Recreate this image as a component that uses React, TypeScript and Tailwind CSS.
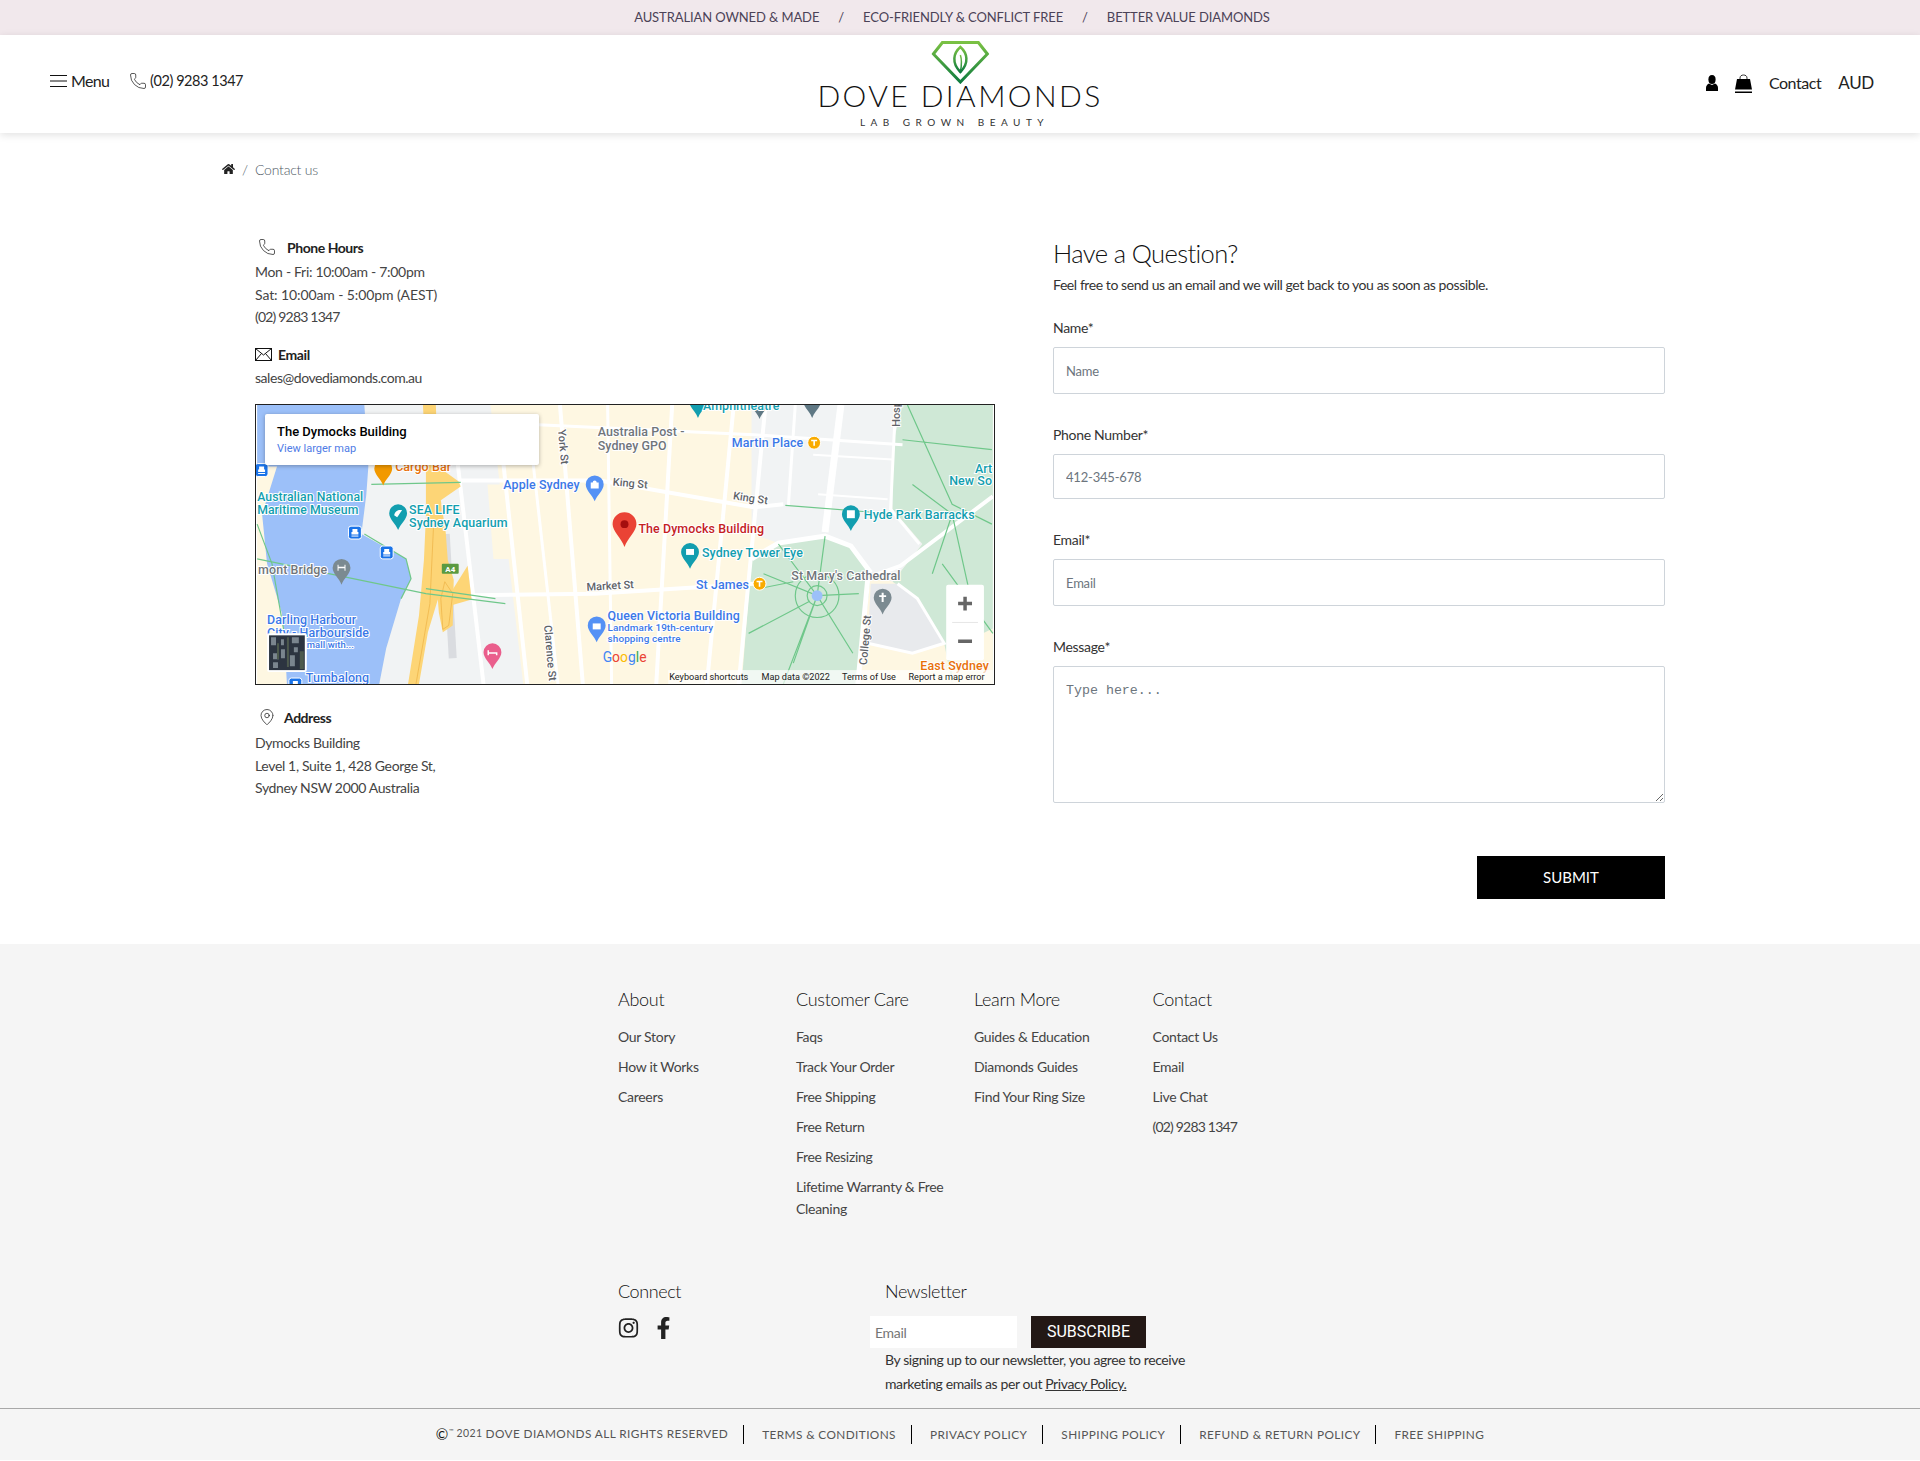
import { FC } from "react";
import { FaHome, FaInstagram, FaFacebookF } from "react-icons/fa";
import { MapPin, Phone } from "lucide-react";

const footerColumns = [
  { title: "About", links: ["Our Story", "How it Works", "Careers"] },
  {
    title: "Customer Care",
    links: ["Faqs", "Track Your Order", "Free Shipping", "Free Return", "Free Resizing", "Lifetime Warranty & Free Cleaning"],
  },
  { title: "Learn More", links: ["Guides & Education", "Diamonds Guides", "Find Your Ring Size"] },
  { title: "Contact", links: ["Contact Us", "Email", "Live Chat", "(02) 9283 1347"] },
];

const legalLinks = ["TERMS & CONDITIONS", "PRIVACY POLICY", "SHIPPING POLICY", "REFUND & RETURN POLICY", "FREE SHIPPING"];

const teal = "#129eaf";
const blue = "#3b78e7";
const gray = "#70757a";

const mapLabels: [string, number, number, string, number][] = [
  ["Amphitheatre", 449, 5, teal, 12.5],
  ["Australia Post -", 343, 31, gray, 12.5],
  ["Sydney GPO", 343, 45, gray, 12.5],
  ["Martin Place", 478, 42, blue, 12.5],
  ["Apple Sydney", 248, 85, blue, 12.5],
  ["Cargo Bar", 139, 66, "#e8710a", 12.5],
  ["Australian National", 0, 97, teal, 12.3],
  ["Maritime Museum", 0, 110, teal, 12.3],
  ["SEA LIFE", 153, 110, teal, 12.5],
  ["Sydney Aquarium", 153, 123, teal, 12.5],
  ["mont Bridge", 1, 170, gray, 12.5],
  ["Darling Harbour", 10, 221, blue, 12.5],
  ["City - Harbourside", 10, 234, blue, 12.5],
  ["mall with...", 50, 245, blue, 9.5],
  ["Tumbalong", 49, 279, blue, 12.5],
  ["Queen Victoria Building", 353, 217, blue, 12.5],
  ["Landmark 19th-century", 353, 228, blue, 10],
  ["shopping centre", 353, 239, blue, 10],
  ["The Dymocks Building", 384, 129, "#c5221f", 12.5],
  ["Sydney Tower Eye", 448, 153, teal, 12.5],
  ["St James", 442, 185, blue, 12.5],
  ["St Mary's Cathedral", 538, 176, gray, 12.5],
  ["Hyde Park Barracks", 611, 115, teal, 12.5],
  ["Art", 723, 68, teal, 12.5],
  ["New So", 697, 81, teal, 12.5],
  ["East Sydney", 668, 267, "#e8710a", 12.5],
];

const streetLabels: [string, number, number, number][] = [
  ["King St", 358, 81, 5],
  ["King St", 479, 95, 8],
  ["Market St", 332, 187, -3],
  ["York St", 303, 25, 85],
  ["Clarence St", 289, 222, 85],
  ["College St", 614, 262, -85],
  ["Hosp", 647, 22, -90],
];

const roads: [string, number][] = [
  ["M205 76L345 76L500 103L530 100", 4],
  ["M190 192L340 190L500 180", 4],
  ["M283 20L500 30L650 40", 3],
  ["M202 59L228 281", 4],
  ["M248 59L272 281", 4],
  ["M278 59L303 281", 3],
  ["M305 0L328 281", 4],
  ["M353 0L357 281", 3],
  ["M418 0L402 281", 4],
  ["M480 0L453 281", 4],
  ["M512 0L485 281", 4],
  ["M542 0L535 102", 3],
  ["M588 0L572 128", 7],
  ["M615 175L605 281", 5],
  ["M498 155L525 139L572 132L598 142L618 169", 5],
  ["M741 92L648 162L620 172", 4],
  ["M643 0L638 105L667 140", 3],
  ["M645 180L665 195L692 240L660 250L615 240", 3],
  ["M560 50L640 55M565 90L635 95", 2],
];

const parkPaths = [
  "M564 192m-22 0a22 22 0 1 0 44 0a22 22 0 1 0 -44 0",
  "M564 192m-10 0a10 10 0 1 0 20 0a10 10 0 1 0 -20 0",
  "M510 170L564 192L606 190M525 140L564 192L540 260M572 132L564 192L600 250M495 230L556 198M505 185L540 178M564 192L530 281",
  "M655 0L700 100L740 120M650 35L740 45M660 80L700 110L680 170M690 160L741 230M700 110L720 200",
  "M532 101L620 108",
];

const transitPaths = [
  "M0 155L170 190L250 200",
  "M115 80L205 78",
  "M0 120L15 160L30 245",
  "M108 130L150 155L155 175L145 195",
  "M170 185L240 195",
];

const Pin: FC<{ cx: number; cy: number; color: string; glyph?: string }> = ({ cx, cy, color, glyph }) => (
  <g>
    <path
      d={`M${cx} ${cy + 17} C${cx - 2} ${cy + 11} ${cx - 9} ${cy + 6} ${cx - 9} ${cy} A9 9 0 1 1 ${cx + 9} ${cy} C${cx + 9} ${cy + 6} ${cx + 2} ${cy + 11} ${cx} ${cy + 17}Z`}
      fill={color}
    />
    {glyph ? <path d={glyph} transform={`translate(${cx - 5} ${cy - 5})`} fill="#fff" /> : null}
  </g>
);

const Transit: FC<{ x: number; y: number }> = ({ x, y }) => (
  <g>
    <rect x={x - 6} y={y - 6} width="13" height="13" rx="2.5" fill="#1a73e8" stroke="#fff" />
    <path d={`M${x - 2} ${y - 3}h5v3h1v2.5h-7v-2.5h1z`} fill="#fff" />
    <path d={`M${x - 3} ${y + 4}h7`} stroke="#fff" />
  </g>
);

const Metro: FC<{ x: number; y: number }> = ({ x, y }) => (
  <g>
    <circle cx={x} cy={y} r="6.5" fill="#f9ab00" stroke="#fff" />
    <path d={`M${x - 3} ${y - 3}h6v1.5h-2.2v4.5h-1.6v-4.5h-2.2z`} fill="#fff" />
  </g>
);

const SydneyMap: FC = () => (
  <svg viewBox="0 0 741 281" className="absolute inset-0 w-full h-full">
    <rect width="741" height="281" fill="#fef7e2" />
    <path d="M108 0L235 0L268 281L123 281L130 245L145 195L155 175L150 155L105 130L110 90Z" fill="#f1f3f4" />
    <path d="M232 80L255 80L260 155L238 155Z" fill="#fef7e2" />
    <path d="M0 0L108 0L112 62L110 90L105 130L150 155L155 175L145 195L130 245L123 281L30 281L28 245L25 210L10 160L5 110L20 62L0 62Z" fill="#9cc0f9" />
    <path d="M498 0L650 0L640 105L670 140L640 178L618 169L598 142L572 132L525 139L498 130Z" fill="#f1f3f4" />
    <path d="M498 155L525 139L572 132L598 142L618 169L612 229L605 281L488 281Z" fill="#cfe8d6" />
    <path d="M650 0L741 0L741 281L700 281L692 240L665 195L640 178L670 140L640 105L640 40Z" fill="#cfe8d6" />
    <path d="M618 180L645 180L665 195L692 240L660 250L615 240Z" fill="#e8eaed" />
    <path d="M700 245L741 225L741 281L700 281Z" fill="#fef7e2" />
    {roads.map(([d, w]) => (
      <path key={d} d={d} stroke="#fff" strokeWidth={w} fill="none" />
    ))}
    <path d="M190 130L197 255" stroke="#dadce0" strokeWidth="8" fill="none" />
    <path
      d="M167 0L180 0L182 62L203 77L205 82L185 96L190 129L192 156L198 176L197 222L187 229L183 209L182 196L172 229L163 281L152 281L163 212L168 156L170 112L170 62Z"
      fill="#fdd576"
    />
    <path d="M212 162L216 196L195 202L195 189Z" fill="#fdd576" />
    <path d="M178 115L174 200L160 281M189 178L197 190L193 222L187 226L185 195Z" stroke="#eeb64a" fill="none" strokeWidth="0.8" />
    <g stroke="#6fc78a" strokeWidth="1.2" fill="none">
      {transitPaths.map((d) => (
        <path key={d} d={d} />
      ))}
      {parkPaths.map((d) => (
        <path key={d} d={d} />
      ))}
    </g>
    <circle cx="564" cy="192" r="5.5" fill="#9cc0f9" />
    <rect x="186" y="160" width="17" height="10" rx="1" fill="#5b9a41" />
    <text x="194.5" y="168" textAnchor="middle" fontSize="8" fontWeight="700" fill="#fff" fontFamily="Roboto">
      A4
    </text>
    <Pin cx={506} cy={-3} color="#5f7884" />
    <Pin cx={444} cy={-4} color={teal} />
    <Pin cx={559} cy={-4} color="#5f7884" />
    <Pin cx={340} cy={80} color="#5491f5" glyph="M1 3h8v6h-8zM3 3a2 2 0 0 1 4 0" />
    <Pin cx={127} cy={64} color="#f29900" />
    <Pin cx={142} cy={109} color={teal} glyph="M1 7C2 2 6 1 9 2C7 4 6 7 4 9Z" />
    <Pin cx={85} cy={164} color="#7b8a91" glyph="M1 2h1v6h-1zM8 2h1v6h-1zM1 4h8v1.5h-8z" />
    <Pin cx={342} cy={222} color="#5491f5" glyph="M1 3h8v6h-8z" />
    <Pin cx={237} cy={249} color="#ea5e8c" glyph="M0 3h1.5v2h8.5v3h-1.5v-1.5h-7v1.5h-1.5z" />
    <Pin cx={436} cy={148} color={teal} glyph="M1 2h8v6h-8z" />
    <Pin cx={630} cy={194} color="#7b8a91" glyph="M4 0h2v2.5h2.5v2h-2.5v5h-2v-5h-2.5v-2h2.5z" />
    <Pin cx={598} cy={110} color={teal} glyph="M1 1h8v8h-8z" />
    <path d="M370 143C367 134 358 127 358 120A12 12 0 1 1 382 120C382 127 373 134 370 143Z" fill="#ea4335" />
    <circle cx="370" cy="120" r="4" fill="#a50e0e" />
    <Transit x={98} y={128} />
    <Transit x={130} y={148} />
    <Transit x={4} y={65} />
    <Transit x={38} y={281} />
    <Metro x={561} y={38} />
    <Metro x={506} y={180} />
    <g fontFamily="Roboto, sans-serif" fontWeight="500" stroke="#fff" strokeWidth="2" paintOrder="stroke">
      {mapLabels.map(([label, x, y, color, size]) => (
        <text key={label + x} x={x} y={y} fill={color} fontSize={size} letterSpacing="0.1">
          {label}
        </text>
      ))}
      {streetLabels.map(([label, x, y, rotate]) => (
        <text key={label + x} x={x} y={y} fill="#5f6368" fontSize="11" transform={`rotate(${rotate} ${x} ${y})`}>
          {label}
        </text>
      ))}
    </g>
    <g>
      <rect x="10" y="230" width="40" height="39" rx="2" fill="#fff" />
      <rect x="12" y="232" width="36" height="35" fill="#2c3440" />
      <path d="M14 234h5v8h-5zM24 236h3v6h-3zM24 246h4v9h-4zM35 234h7v6h-7zM37 244h4v5h-4zM16 250h6v6h-6zM16 259h5v6h-5zM33 252h5v11h-5z" fill="#7a858e" />
      <path d="M20 240h2v16h-2zM30 234h2v30h-2zM43 248h4v18h-4z" fill="#4d5a4d" />
    </g>
    <text x="348" y="259" fontFamily="Roboto, sans-serif" fontSize="14">
      <tspan fill="#4285f4">G</tspan>
      <tspan fill="#ea4335">o</tspan>
      <tspan fill="#fbbc05">o</tspan>
      <tspan fill="#4285f4">g</tspan>
      <tspan fill="#34a853">l</tspan>
      <tspan fill="#ea4335">e</tspan>
    </text>
    <rect x="414" y="267" width="327" height="14" fill="#fff" fillOpacity="0.7" />
    <g fontFamily="Roboto, sans-serif" fontSize="9.2" fill="#222">
      <text x="415" y="277">Keyboard shortcuts</text>
      <text x="508" y="277">Map data ©2022</text>
      <text x="589" y="277">Terms of Use</text>
      <text x="656" y="277">Report a map error</text>
    </g>
    <rect x="694" y="181" width="38" height="76" rx="2" fill="#fff" />
    <path d="M700 219h26" stroke="#e6e6e6" />
    <path d="M706 200h14M713 193v14M706 238h14" stroke="#666" strokeWidth="3.5" />
  </svg>
);

const Logo: FC = () => (
  <div className="flex flex-col items-center">
    <svg viewBox="0 0 58 43" className="w-[58px] h-[43px] mt-[6px]">
      <defs>
        <linearGradient id="logoGreen" x1="0" y1="0" x2="0" y2="1">
          <stop offset="0" stopColor="#7ac143" />
          <stop offset="1" stopColor="#0e7c3f" />
        </linearGradient>
      </defs>
      <path d="M11 1.5H47L56 13L29 41L2 13Z" fill="none" stroke="url(#logoGreen)" strokeWidth="3" />
      <path d="M29 6C22 12 20 22 29 31C38 22 36 12 29 6Z" fill="none" stroke="url(#logoGreen)" strokeWidth="2.5" />
      <path d="M29 14C31 20 30 26 29 31" fill="none" stroke="url(#logoGreen)" strokeWidth="1.5" />
    </svg>
    <div className="text-[30px] leading-[24px] -mt-[1px] font-light tracking-[2.4px] text-[#111] whitespace-nowrap">DOVE DIAMONDS</div>
    <div className="text-[10px] leading-[12px] mt-[9px] mr-[11px] tracking-[5.5px] text-[#333] whitespace-nowrap">LAB GROWN BEAUTY</div>
  </div>
);

const MailIcon: FC = () => (
  <svg viewBox="0 0 17 13" className="w-[17px] h-[13px]" fill="none" stroke="#111">
    <rect x="0.5" y="0.5" width="16" height="12" />
    <path d="M0.5 0.5L8.5 7L16.5 0.5M0.5 12.5L6.5 5.5M16.5 12.5L10.5 5.5" />
  </svg>
);

const UserIcon: FC = () => (
  <svg viewBox="0 0 12 16" className="w-[12px] h-[16px]" fill="#000">
    <ellipse cx="6" cy="4.5" rx="3.6" ry="4.5" />
    <path d="M3 8.5L6 10L9 8.5C11 9.5 12 11 12 13V16H0V13C0 11 1 9.5 3 8.5Z" />
  </svg>
);

const BagIcon: FC = () => (
  <svg viewBox="0 0 17 19" className="w-[17px] h-[19px]" fill="none">
    <path d="M5 7V4C5 2 6.5 1 8.5 1S12 2 12 4V7" stroke="#333" />
    <path d="M2 5H15L17 15.5H0Z" fill="#000" />
    <path d="M0 17.5H17V19H0Z" fill="#000" />
  </svg>
);

const Field: FC<{ label: string; placeholder: string; height: string }> = ({ label, placeholder, height }) => (
  <div>
    <label className="block text-[14px] leading-[20px] tracking-[-0.3px] text-[#333] mb-[9px]">{label}</label>
    <input
      placeholder={placeholder}
      className={`block w-full ${height} border border-[#ced4da] rounded-[2px] px-[12px] text-[13px] tracking-[-0.2px] placeholder:text-[#6c757d] outline-none`}
    />
  </div>
);

const App: FC = () => (
  <div className="min-h-[1461px] bg-white text-[#333] font-['Lato',sans-serif]">
    <div className="h-[35px] bg-[#f1e8ec] flex items-center justify-center gap-[19px] pr-[16px] text-[13px] tracking-[-0.1px] text-[#4b4257]">
      <span>AUSTRALIAN OWNED &amp; MADE</span>
      <span>/</span>
      <span>ECO-FRIENDLY &amp; CONFLICT FREE</span>
      <span>/</span>
      <span>BETTER VALUE DIAMONDS</span>
    </div>

    <header className="h-[98px] bg-white shadow-[0_2px_8px_rgba(0,0,0,0.12)] relative px-[50px] flex justify-between">
      <div className="flex items-center gap-[20px] h-[92px] text-[#222]">
        <div className="flex items-center gap-[4px]">
          <svg viewBox="0 0 17 14" className="w-[17px] h-[14px]" stroke="#111" fill="none">
            <path d="M0 1.5H17M0 7H17M0 12.5H17" />
          </svg>
          <span className="text-[16px] tracking-[-0.7px]">Menu</span>
        </div>
        <div className="flex items-center gap-[3px]">
          <Phone size={18} strokeWidth={1} />
          <span className="text-[14.5px] tracking-[-0.45px]">(02) 9283 1347</span>
        </div>
      </div>
      <div className="absolute left-1/2 top-0 -translate-x-1/2">
        <Logo />
      </div>
      <div className="flex items-center h-[96px] text-[#222]">
        <span className="mr-[17px] flex">
          <UserIcon />
        </span>
        <span className="mr-[17px] flex">
          <BagIcon />
        </span>
        <span className="text-[16px] tracking-[-0.45px] mr-[17px]">Contact</span>
        <span className="text-[17px] tracking-[-0.3px] mr-[-4px]">AUD</span>
      </div>
    </header>

    <main className="w-[1476px] mx-auto pt-[26px]">
      <nav className="flex items-center h-[20px] text-[14px] font-light text-[#4f5b66] tracking-[-0.2px]">
        <FaHome className="w-[13px] h-[12px] text-[#222]" />
        <span className="mx-[7px]">/</span>
        <span>Contact us</span>
      </nav>

      <div className="flex pl-[33px] gap-[58px] mt-[56px] text-[14px] text-[#444]">
        <section className="w-[740px]">
          <h3 className="flex items-center h-[24px] font-bold text-[14px] text-[#222] tracking-[-0.45px] pl-[3px]">
            <Phone size={18} strokeWidth={1} className="mr-[11px]" />
            Phone Hours
          </h3>
          <div className="leading-[22.5px] tracking-[-0.3px] mt-[2px]">
            <p>Mon - Fri: 10:00am - 7:00pm</p>
            <p className="tracking-[-0.1px]">Sat: 10:00am - 5:00pm (AEST)</p>
            <p className="tracking-[-0.8px]">(02) 9283 1347</p>
          </div>
          <h3 className="flex items-center h-[24px] font-bold text-[14px] text-[#222] tracking-[-0.4px] mt-[14px]">
            <span className="mr-[6px] flex">
              <MailIcon />
            </span>
            Email
          </h3>
          <p className="leading-[22.5px] tracking-[-0.45px]">sales@dovediamonds.com.au</p>

          <div className="relative h-[281px] mt-[15px] border border-[#222] overflow-hidden">
            <SydneyMap />
            <div className="absolute left-[9px] top-[9px] w-[274px] h-[51px] bg-white rounded-[2px] shadow-[0_1px_4px_rgba(0,0,0,0.3)] pl-[12px] pt-[10px] font-['Roboto',sans-serif]">
              <div className="text-[13px] leading-[16px] font-medium text-black">The Dymocks Building</div>
              <div className="text-[11px] leading-[17px] text-[#4f7ce6]">View larger map</div>
            </div>
          </div>

          <h3 className="flex items-center h-[24px] font-bold text-[14px] text-[#222] tracking-[-0.45px] mt-[20px] pl-[3px]">
            <MapPin size={18} strokeWidth={1} className="mr-[8px]" />
            Address
          </h3>
          <div className="leading-[22.5px] tracking-[-0.35px] mt-[3px]">
            <p>Dymocks Building</p>
            <p>Level 1, Suite 1, 428 George St,</p>
            <p>Sydney NSW 2000 Australia</p>
          </div>
        </section>

        <section className="w-[612px] pt-[1px]">
          <h1 className="text-[25.5px] leading-[34px] font-light tracking-[-0.6px] text-[#111]">Have a Question?</h1>
          <p className="text-[14px] leading-[20px] tracking-[-0.42px] mt-[5px] text-[#333]">
            Feel free to send us an email and we will get back to you as soon as possible.
          </p>
          <div className="mt-[23px] flex flex-col gap-[31px]">
            <Field label="Name*" placeholder="Name" height="h-[47px]" />
            <Field label="Phone Number*" placeholder="412-345-678" height="h-[45px]" />
            <Field label="Email*" placeholder="Email" height="h-[47px]" />
            <div>
              <label className="block text-[14px] leading-[20px] tracking-[-0.3px] text-[#333] mb-[9px]">Message*</label>
              <textarea
                placeholder="Type here..."
                className="block w-full h-[137px] border border-[#ced4da] rounded-[2px] px-[12px] py-[14px] text-[13.3px] font-['Liberation_Mono',monospace] placeholder:text-[#6c757d] outline-none"
              />
            </div>
          </div>
          <div className="flex justify-end mt-[53px]">
            <button className="w-[188px] h-[43px] bg-black text-white text-[15px]">SUBMIT</button>
          </div>
        </section>
      </div>
    </main>

    <footer className="bg-[#f5f5f5] mt-[45px] pt-[42px] h-[516px] text-[14px] text-[#444]">
      <div className="w-[684px] mx-auto">
        <div className="grid grid-cols-[178px_178px_178.5px_149.5px] h-[251px]">
          {footerColumns.map((column) => (
            <div key={column.title}>
              <h4 className="text-[18px] leading-[26px] font-light text-[#111] tracking-[-0.3px] mb-[14px]">{column.title}</h4>
              <ul className="w-[150px]">
                {column.links.map((link) => (
                  <li key={link} className={`leading-[22px] mb-[8px] ${link.startsWith("(") ? "tracking-[-0.8px]" : "tracking-[-0.3px]"}`}>
                    {link}
                  </li>
                ))}
              </ul>
            </div>
          ))}
        </div>
        <div className="flex mt-[41px]">
          <div className="w-[267px]">
            <h4 className="text-[18px] leading-[26px] font-light text-[#111] tracking-[-0.4px]">Connect</h4>
            <div className="flex items-center gap-[16px] mt-[13px] text-[#222]">
              <FaInstagram className="w-[21px] h-[22px]" />
              <FaFacebookF className="w-[17px] h-[22px]" />
            </div>
          </div>
          <div>
            <h4 className="text-[18px] leading-[26px] font-light text-[#111] tracking-[-0.4px]">Newsletter</h4>
            <div className="flex -ml-[15px] mt-[12px] gap-[14px]">
              <input placeholder="Email" className="w-[147px] h-[32px] bg-white px-[5px] text-[14px] tracking-[-0.3px] placeholder:text-[#757575] outline-none" />
              <button className="w-[115px] h-[32px] bg-[#231815] text-white text-[16px] font-['Roboto',sans-serif]">SUBSCRIBE</button>
            </div>
            <p className="w-[320px] leading-[24px] mt-[0px] tracking-[-0.4px] text-[#333]">
              By signing up to our newsletter, you agree to receive marketing emails as per out <a className="underline">Privacy Policy.</a>
            </p>
          </div>
        </div>
      </div>
      <div className="border-t border-[#a8a8a8] mt-[12px] h-[51px] flex items-center justify-center text-[11.8px] tracking-[0.4px] text-[#555]">
        <span className="pr-[15px] flex items-center">
          <span className="text-[15px] leading-none text-[#111]">©</span>
          <span className="text-[6px] leading-none -mt-[6px] mr-[3px]">™</span>
          <span className="text-[10.5px] mr-[3px]">2021</span>
          DOVE DIAMONDS ALL RIGHTS RESERVED
        </span>
        {legalLinks.map((link) => (
          <span key={link} className="border-l border-black h-[19px] leading-[19px] pl-[18px] pr-[15px] last:pr-0">
            {link}
          </span>
        ))}
      </div>
    </footer>
  </div>
);

export default App;
